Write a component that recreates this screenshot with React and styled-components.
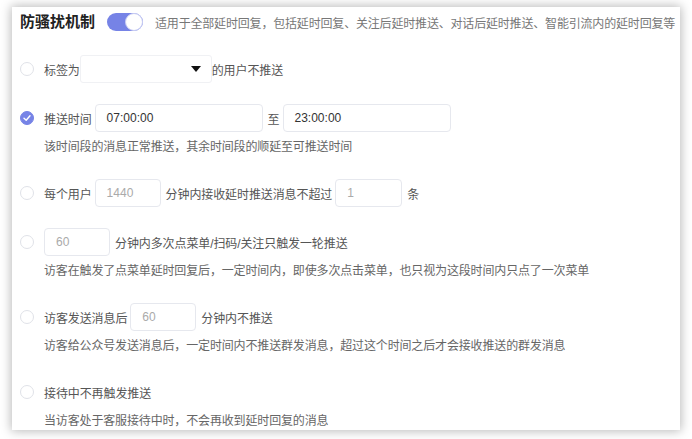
import React from "react";
import styled, { createGlobalStyle } from "styled-components";

const GlobalStyle = createGlobalStyle`
  body {
    margin: 0;
    background: #ffffff;
    font-family: "Liberation Sans", "Noto Sans CJK SC", sans-serif;
  }
`;

const Page = styled.div`
  padding: 7px 12px 9px 12px;
`;

const Card = styled.div`
  background: #fff;
  box-shadow: 0 0 10px 1px rgba(0, 0, 0, 0.28);
  padding: 0 0 1px 8px;
  height: 423px;
  box-sizing: border-box;
  overflow: hidden;
`;

const Header = styled.div`
  display: flex;
  align-items: center;
  height: 30px;
`;

const Title = styled.h3`
  margin: 0;
  font-size: 15px;
  font-weight: bold;
  color: #222;
  line-height: 18px;
  white-space: nowrap;
  flex: none;
`;

const Toggle = styled.div`
  width: 36px;
  height: 18px;
  border-radius: 9px;
  background: ${(p) => (p.on ? "#7683e6" : "#dcdfe6")};
  margin: 0 12px;
  position: relative;
  flex: none;
  &::after {
    content: "";
    position: absolute;
    top: 0;
    right: ${(p) => (p.on ? "0" : "auto")};
    left: ${(p) => (p.on ? "auto" : "0")};
    width: 16px;
    height: 16px;
    border-radius: 50%;
    background: #fff;
    border: 1px solid #c9cdf3;
  }
`;

const Note = styled.span`
  font-size: 12px;
  letter-spacing: -0.18px;
  color: #777;
  white-space: nowrap;
`;

const List = styled.div`
  display: flex;
  flex-direction: column;
  gap: 21px;
  margin-top: 18px;
`;

const Group = styled.div`
  display: flex;
  flex-direction: column;
  gap: 7px;
`;

const Row = styled.div`
  display: flex;
  align-items: center;
  height: 28px;
  font-size: 12px;
  letter-spacing: -0.1px;
  color: #555;
  white-space: nowrap;
`;

const Radio = styled.span`
  width: 14px;
  height: 14px;
  box-sizing: border-box;
  border-radius: 50%;
  margin: 0 10px 0 0;
  flex: none;
  border: 1px solid ${(p) => (p.checked ? "#7683e6" : "#e0e2e8")};
  background: ${(p) => (p.checked ? "#7683e6" : "#fff")};
  display: flex;
  align-items: center;
  justify-content: center;
`;

const Input = styled.div`
  width: ${(p) => p.w}px;
  height: 28px;
  box-sizing: border-box;
  border: 1px solid #e6e8ee;
  border-radius: 4px;
  margin: 0 5px 0 ${(p) => (p.first ? 0 : 3)}px;
  padding-left: 11px;
  display: flex;
  align-items: center;
  font-size: 12px;
  letter-spacing: 0;
  color: ${(p) => (p.placeholder ? "#aaa" : "#333")};
  flex: none;
`;

const Select = styled.div`
  width: 132px;
  height: 28px;
  box-sizing: border-box;
  border: 1px solid #f0f1f4;
  border-radius: 3px;
  display: flex;
  align-items: center;
  justify-content: flex-end;
  padding-right: 10px;
  flex: none;
`;

const Caret = styled.span`
  width: 0;
  height: 0;
  border-left: 5px solid transparent;
  border-right: 5px solid transparent;
  border-top: 6px solid #111;
`;

const Hint = styled.div`
  font-size: 12px;
  letter-spacing: -0.15px;
  line-height: 16px;
  color: #666;
  padding-left: 24px;
  margin-bottom: 3px;
  white-space: nowrap;
`;

const Check = () => (
  <svg width="8" height="8" viewBox="0 0 8 8">
    <path d="M1 4.2 L3.2 6.2 L7 1.8" fill="none" stroke="#fff" strokeWidth="1.4" strokeLinecap="round" strokeLinejoin="round" />
  </svg>
);

export default function App() {
  return (
    <>
      <GlobalStyle />
      <Page>
        <Card>
          <Header>
            <Title>防骚扰机制</Title>
            <Toggle on />
            <Note>适用于全部延时回复，包括延时回复、关注后延时推送、对话后延时推送、智能引流内的延时回复等</Note>
          </Header>
          <List>
            <Group>
              <Row>
                <Radio />
                标签为
                <Select>
                  <Caret />
                </Select>
                的用户不推送
              </Row>
            </Group>
            <Group>
              <Row>
                <Radio checked>
                  <Check />
                </Radio>
                推送时间
                <Input w={168}>07:00:00</Input>
                至
                <Input w={168}>23:00:00</Input>
              </Row>
              <Hint>该时间段的消息正常推送，其余时间段的顺延至可推送时间</Hint>
            </Group>
            <Group>
              <Row>
                <Radio />
                每个用户
                <Input w={66} placeholder>1440</Input>
                分钟内接收延时推送消息不超过
                <Input w={67} placeholder>1</Input>
                条
              </Row>
            </Group>
            <Group>
              <Row>
                <Radio />
                <Input w={66} placeholder first>60</Input>
                分钟内多次点菜单/扫码/关注只触发一轮推送
              </Row>
              <Hint>访客在触发了点菜单延时回复后，一定时间内，即使多次点击菜单，也只视为这段时间内只点了一次菜单</Hint>
            </Group>
            <Group>
              <Row>
                <Radio />
                访客发送消息后
                <Input w={66} placeholder>60</Input>
                分钟内不推送
              </Row>
              <Hint>访客给公众号发送消息后，一定时间内不推送群发消息，超过这个时间之后才会接收推送的群发消息</Hint>
            </Group>
            <Group>
              <Row>
                <Radio />
                接待中不再触发推送
              </Row>
              <Hint>当访客处于客服接待中时，不会再收到延时回复的消息</Hint>
            </Group>
          </List>
        </Card>
      </Page>
    </>
  );
}
